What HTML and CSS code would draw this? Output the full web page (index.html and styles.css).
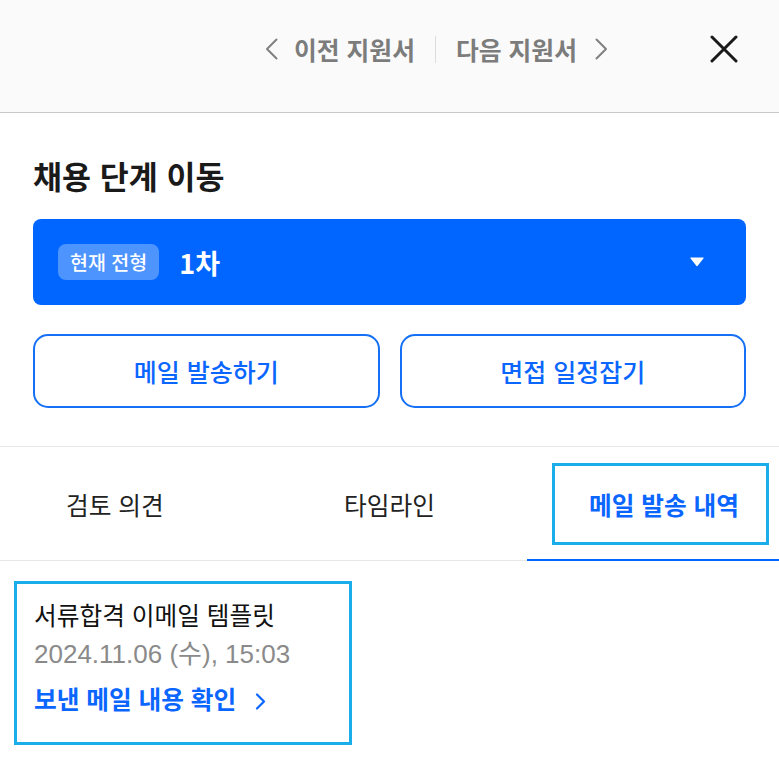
FILE: index.html
```html
<!DOCTYPE html>
<html lang="ko">
<head>
<meta charset="utf-8">
<title>지원서</title>
<link rel="stylesheet" href="styles.css">
</head>
<body>
<header class="topbar">
  <nav class="pager">
    <a class="pager-link prev">
      <svg class="chev" width="13" height="22" viewBox="0 0 13 22"><path d="M11.5 1.5 L2 11 L11.5 20.5" fill="none" stroke="#808080" stroke-width="2" stroke-linecap="round" stroke-linejoin="round"/></svg>
      <span>이전 지원서</span>
    </a>
    <span class="pager-sep"></span>
    <a class="pager-link next">
      <span>다음 지원서</span>
      <svg class="chev" width="13" height="22" viewBox="0 0 13 22"><path d="M1.5 1.5 L11 11 L1.5 20.5" fill="none" stroke="#808080" stroke-width="2" stroke-linecap="round" stroke-linejoin="round"/></svg>
    </a>
  </nav>
  <button class="close-btn" aria-label="닫기">
    <svg width="28" height="28" viewBox="0 0 28 28"><path d="M2 2 L26 26 M26 2 L2 26" stroke="#1a1a1a" stroke-width="3" stroke-linecap="round"/></svg>
  </button>
</header>

<section class="stage">
  <h2 class="stage-title">채용 단계 이동</h2>
  <button class="stage-select">
    <span class="stage-badge">현재 전형</span>
    <span class="stage-name">1차</span>
    <svg class="stage-caret" width="16" height="12" viewBox="0 0 16 12"><path d="M2 1.5 H14 Q15.3 1.5 14.4 2.6 L8.9 9.6 Q8 10.7 7.1 9.6 L1.6 2.6 Q0.7 1.5 2 1.5 Z" fill="#fff"/></svg>
  </button>
  <div class="stage-actions">
    <button class="action-btn">메일 발송하기</button>
    <button class="action-btn">면접 일정잡기</button>
  </div>
</section>

<div class="tabs">
  <div class="tab tab-review"><span>검토 의견</span></div>
  <div class="tab tab-timeline"><span>타임라인</span></div>
  <div class="tab tab-mail active"><button class="tab-btn">메일 발송 내역</button></div>
</div>

<div class="mail-list">
  <div class="mail-card">
    <div class="mail-title">서류합격 이메일 템플릿</div>
    <div class="mail-date">2024.11.06 (수), 15:03</div>
    <a class="mail-link">보낸 메일 내용 확인
      <svg width="11" height="17" viewBox="0 0 11 17"><path d="M2 1.5 L9 8.5 L2 15.5" fill="none" stroke="#0a66ff" stroke-width="2.2" stroke-linecap="round" stroke-linejoin="round"/></svg>
    </a>
  </div>
</div>
</body>
</html>
```

FILE: styles.css
```css
* { box-sizing: border-box; }

html, body {
  margin: 0;
  padding: 0;
  background: #ffffff;
}

body {
  font-family: "Noto Sans CJK KR", "Noto Sans", sans-serif;
  color: #1a1a1a;
  width: 779px;
  overflow: hidden;
}

button {
  font-family: inherit;
  background: none;
  border: none;
  padding: 0;
  margin: 0;
  cursor: pointer;
}

/* ---------- top bar ---------- */
.topbar {
  height: 113px;
  background: #fafafa;
  border-bottom: 1px solid #c9c9c9;
  display: flex;
  justify-content: flex-end;
  align-items: flex-start;
  padding: 35px 41px 0 0;
}

.pager {
  display: flex;
  align-items: center;
  height: 28px;
  margin-right: 102px;
}

.pager-link {
  display: flex;
  align-items: center;
  font-size: 24.8px;
  font-weight: 600;
  color: #7c7c7c;
  line-height: 28px;
}

.pager-link.prev .chev { margin-right: 16px; }
.pager-link.next .chev { margin-left: 18px; }

.pager-sep {
  width: 1px;
  height: 27px;
  background: #dcdcdc;
  margin: 0 20px;
}

.close-btn {
  width: 28px;
  height: 28px;
  display: block;
}
.close-btn svg { display: block; }

/* ---------- stage ---------- */
.stage {
  padding: 42px 33px 38px;
  border-bottom: 1px solid #e6e6e6;
}

.stage-title {
  margin: 0;
  font-size: 31.5px;
  line-height: 40px;
  font-weight: 700;
  color: #1a1a1a;
}

.stage-select {
  margin-top: 24px;
  width: 100%;
  height: 86px;
  background: #0066ff;
  border-radius: 8px;
  display: flex;
  align-items: center;
  padding: 0 41px 0 25px;
  color: #ffffff;
  text-align: left;
}

.stage-badge {
  height: 36px;
  line-height: 36px;
  padding: 0 12px;
  border-radius: 8px;
  background: rgba(255, 255, 255, 0.3);
  font-size: 19.5px;
  font-weight: 500;
}

.stage-name {
  margin-left: 20px;
  font-size: 27px;
  font-weight: 700;
  flex: 1;
}

.stage-caret { display: block; }

.stage-actions {
  margin-top: 29px;
  display: grid;
  grid-template-columns: 1fr 1fr;
  gap: 20px;
}

.action-btn {
  height: 74px;
  border: 2px solid #1570f5;
  border-radius: 15px;
  background: #fff;
  color: #0a66ff;
  font-size: 25px;
  font-weight: 500;
}

/* ---------- tabs ---------- */
.tabs {
  display: grid;
  grid-template-columns: 252px 275px 252px;
  height: 114px;
  border-bottom: 1px solid #e6e6e6;
}

.tab {
  display: flex;
  align-items: center;
  font-size: 24.7px;
  color: #222;
}

.tab-review { padding-left: 66px; }
.tab-timeline { justify-content: center; }

.tab-mail {
  position: relative;
  padding-left: 25px;
}
.tab-mail::after {
  content: "";
  position: absolute;
  left: 0;
  right: 0;
  bottom: -1px;
  height: 2px;
  background: #0066ff;
}

.tab-btn {
  width: 217px;
  height: 82px;
  border: 3px solid #19aee9;
  color: #0a66ff;
  font-size: 24.7px;
  font-weight: 600;
  padding-left: 7px;
}

/* ---------- mail list ---------- */
.mail-list {
  padding: 20px 14px;
}

.mail-card {
  width: 338px;
  height: 164px;
  border: 3px solid #19aee9;
  padding: 15px 17px 0;
  font-family: "Liberation Sans", "Noto Sans CJK KR", sans-serif;
}

.mail-title {
  font-size: 24.7px;
  line-height: 36px;
  color: #111;
}

.mail-date {
  font-size: 26px;
  line-height: 38px;
  color: #8a8a8a;
}

.mail-link {
  margin-top: 9px;
  display: flex;
  align-items: center;
  gap: 19px;
  font-size: 24.7px;
  line-height: 38px;
  font-weight: 700;
  color: #0a66ff;
}
.mail-link svg { display: block; }
```
